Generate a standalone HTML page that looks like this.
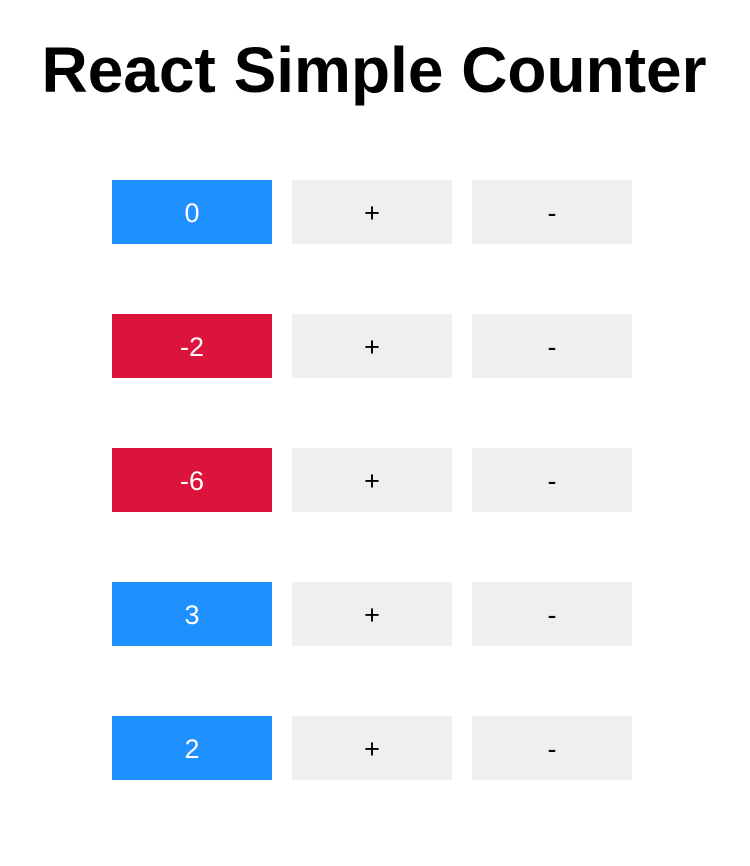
<!DOCTYPE html>
<html><head><meta charset="utf-8"><style>
body{margin:0;background:#fff;font-family:"Liberation Sans",Arial,sans-serif;}
h1{position:absolute;left:-1px;width:750px;top:-2px;margin:0;text-align:center;font-size:64px;font-weight:bold;line-height:144px;}
.b{position:absolute;width:160px;height:64px;line-height:66px;text-align:center;font-size:27px;}
.blue{background:#1e90ff;color:#fff}.red{background:#dc143c;color:#fff}.g{background:#efefef;color:#000}
</style></head><body>
<h1>React Simple Counter</h1>
<div class="b blue" style="left:112px;top:180px">0</div><div class="b g" style="left:292px;top:180px">+</div><div class="b g" style="left:472px;top:180px">-</div>
<div class="b red" style="left:112px;top:314px">-2</div><div class="b g" style="left:292px;top:314px">+</div><div class="b g" style="left:472px;top:314px">-</div>
<div class="b red" style="left:112px;top:448px">-6</div><div class="b g" style="left:292px;top:448px">+</div><div class="b g" style="left:472px;top:448px">-</div>
<div class="b blue" style="left:112px;top:582px">3</div><div class="b g" style="left:292px;top:582px">+</div><div class="b g" style="left:472px;top:582px">-</div>
<div class="b blue" style="left:112px;top:716px">2</div><div class="b g" style="left:292px;top:716px">+</div><div class="b g" style="left:472px;top:716px">-</div>
</body></html>
